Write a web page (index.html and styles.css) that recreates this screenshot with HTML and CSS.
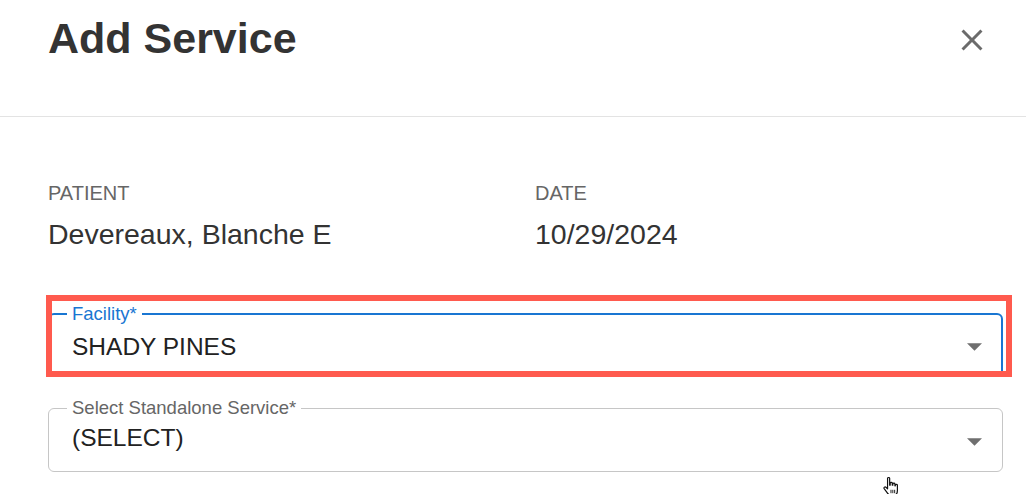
FILE: index.html
```html
<!DOCTYPE html>
<html lang="en">
<head>
<meta charset="utf-8">
<title>Add Service</title>
<link rel="stylesheet" href="styles.css">
</head>
<body>
<div class="dialog">
  <header class="dialog-header">
    <h1 class="dialog-title">Add Service</h1>
    <button class="close-btn" aria-label="Close">
      <svg viewBox="0 0 24 24" width="36" height="36"><path d="M19 6.41 17.59 5 12 10.59 6.41 5 5 6.41 10.59 12 5 17.59 6.41 19 12 13.41 17.59 19 19 17.59 13.41 12z"/></svg>
    </button>
  </header>
  <div class="dialog-body">
    <div class="info-grid">
      <div class="info">
        <div class="info-label">PATIENT</div>
        <div class="info-value">Devereaux, Blanche E</div>
      </div>
      <div class="info">
        <div class="info-label">DATE</div>
        <div class="info-value">10/29/2024</div>
      </div>
    </div>
    <div class="field-wrap">
      <fieldset class="field field--focused">
        <legend>Facility*</legend>
        <div class="field-row">
          <span class="field-value">SHADY PINES</span>
          <svg class="caret" viewBox="0 0 10 5" width="15" height="8"><path d="M0 0l5 5 5-5z"/></svg>
        </div>
      </fieldset>
      <div class="highlight"></div>
    </div>
    <fieldset class="field field--idle">
      <legend>Select Standalone Service*</legend>
      <div class="field-row">
        <span class="field-value">(SELECT)</span>
        <svg class="caret caret--low" viewBox="0 0 10 5" width="15" height="8"><path d="M0 0l5 5 5-5z"/></svg>
      </div>
    </fieldset>
  </div>
  <svg class="cursor" viewBox="0 0 16 16" width="21" height="21">
    <path d="M5 1.8c0-.9 1.6-.9 1.6 0V7h.4V5.6c0-.9 1.6-.9 1.6 0V7h.4V6.1c0-.9 1.6-.9 1.6 0V7.5h.3V7c0-.9 1.6-.9 1.6 0v4c0 2.1-1.3 3.6-3.2 3.6H7.6c-1.3 0-2.1-.7-2.8-1.7L2.4 9.6c-.5-.9.7-1.8 1.4-1L5 9.8z" fill="#fff" stroke="#111" stroke-width="0.9" stroke-linejoin="round"/>
    <path d="M7.6 10.5v2.6M9 10.5v2.6M10.4 10.5v2.6" stroke="#111" stroke-width="0.7"/>
  </svg>
</div>
</body>
</html>
```
FILE: styles.css
```css
* { box-sizing: border-box; }

html, body {
  margin: 0;
  padding: 0;
  background: #ffffff;
}

body {
  font-family: "Liberation Sans", Arial, Helvetica, sans-serif;
  color: #333333;
  width: 1026px;
  height: 494px;
  overflow: hidden;
}

.dialog {
  position: relative;
  width: 1026px;
  height: 494px;
}

.dialog-header {
  box-sizing: content-box;
  height: 99px;
  padding: 17px 36px 0 48px;
  border-bottom: 1px solid #e3e3e3;
  display: flex;
  justify-content: space-between;
  align-items: flex-start;
}

.dialog-title {
  margin: 0;
  font-size: 43px;
  line-height: 43px;
  font-weight: 700;
  color: #333333;
}

.close-btn {
  margin-top: 5px;
  padding: 0;
  border: 0;
  background: none;
  width: 36px;
  height: 36px;
  display: flex;
}

.close-btn svg { fill: #6b6b6b; }

.dialog-body {
  padding: 64px 23px 0 48px;
}

.info-grid {
  display: grid;
  grid-template-columns: 487px 1fr;
}

.info {
  display: flex;
  flex-direction: column;
  gap: 12px;
}

.info-label {
  font-size: 20px;
  line-height: 24px;
  color: #666666;
}

.info-value {
  font-size: 28.5px;
  line-height: 34px;
  color: #333333;
}

.field-wrap {
  position: relative;
  margin-top: 53px;
}

.field {
  margin: 0;
  min-inline-size: 0;
  border-radius: 6px;
}

.field legend {
  font-size: 18.5px;
  line-height: 20px;
  padding: 0 5px;
  margin-left: -5px;
}

.field--focused {
  border: 2px solid #1976d2;
  padding: 9px 19px 14px 22px;
}

.field--focused legend { color: #1976d2; }

.field--idle {
  margin-top: 21px;
  border: 1px solid #c6c6c6;
  padding: 6px 20px 19px 23px;
}

.field--idle legend { color: #666666; }

.field-row {
  display: flex;
  align-items: center;
  justify-content: space-between;
}

.field-value {
  font-size: 24.5px;
  line-height: 28px;
  color: #222222;
}

.caret { fill: #6f6f6f; display: block; }
.caret--low { margin-top: 8px; }

.highlight {
  position: absolute;
  left: -2px;
  top: -9px;
  width: 966px;
  height: 82px;
  border: 6px solid #ff5a4e;
  pointer-events: none;
}

.cursor {
  position: absolute;
  left: 881px;
  top: 476px;
}
```
